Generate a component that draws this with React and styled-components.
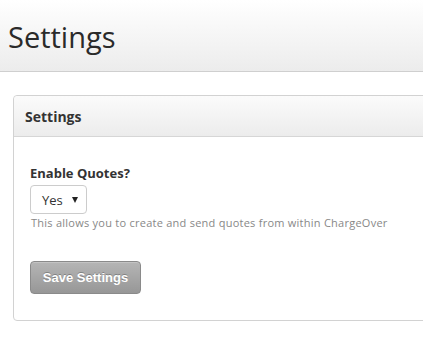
import React, { useState } from 'react';
import styled, { createGlobalStyle } from 'styled-components';

const GlobalStyle = createGlobalStyle`
	html, body {
		margin: 0;
		padding: 0;
		background: #fff;
		overflow: hidden;
	}
	body {
		font-family: "Open Sans", "Liberation Sans", sans-serif;
		color: #333;
	}
`;

const PageHeader = styled.header`
	height: 72px;
	box-sizing: border-box;
	padding: 20px 8px 0;
	background: linear-gradient(to bottom, #ffffff 0%, #ececec 100%);
	border-bottom: 1px solid #cfcfcf;
`;

const Title = styled.h1`
	margin: 0;
	font-size: 29px;
	line-height: 34px;
	font-weight: 400;
	color: #2a2a2a;
`;

const Panel = styled.section`
	margin: 23px -12px 0 13px;
	border: 1px solid #d2d2d2;
	border-radius: 4px;
	background: #fff;
	padding-bottom: 26px;
`;

const PanelHead = styled.div`
	height: 41px;
	box-sizing: border-box;
	padding: 1px 11px 0;
	display: flex;
	align-items: center;
	background: linear-gradient(to bottom, #fbfbfb 0%, #ececec 100%);
	border-bottom: 1px solid #d6d6d6;
	border-radius: 4px 4px 0 0;
	font-size: 14px;
	font-weight: 700;
	color: #333;
`;

const PanelBody = styled.div`
	padding: 27px 16px 0;
`;

const Label = styled.label`
	display: block;
	font-size: 13px;
	line-height: 18px;
	font-weight: 700;
	color: #333;
`;

const SelectBox = styled.div`
	position: relative;
	margin-top: 3px;
	width: 57px;
	height: 29px;
	box-sizing: border-box;
	border: 1px solid #cccccc;
	border-radius: 4px;
	background: #fff;
	display: flex;
	align-items: center;
	padding-left: 11px;
	font-size: 13px;
	color: #333;
	cursor: pointer;
`;

const Caret = styled.span`
	position: absolute;
	right: 8px;
	top: 11px;
	width: 0;
	height: 0;
	border-left: 3px solid transparent;
	border-right: 3px solid transparent;
	border-top: 6px solid #222;
`;

const Help = styled.p`
	margin: 1px 0 0 1px;
	font-size: 11px;
	line-height: 15px;
	letter-spacing: 0.25px;
	color: #888;
`;

const SaveButton = styled.button`
	margin-top: 31px;
	width: 111px;
	height: 33px;
	border: 1px solid #8a8a8a;
	border-radius: 4px;
	background: linear-gradient(to bottom, #b5b5b5 0%, #979797 100%);
	color: #fff;
	font-family: "Liberation Sans", Arial, sans-serif;
	font-size: 13px;
	font-weight: 700;
	text-shadow: 0 -1px 0 rgba(0, 0, 0, 0.25);
	box-shadow: inset 0 1px 0 rgba(255, 255, 255, 0.2);
	cursor: pointer;
`;

const App = () => {
	const [ quotes ] = useState('Yes');

	return (
		<>
			<GlobalStyle />
			<PageHeader>
				<Title>Settings</Title>
			</PageHeader>
			<Panel>
				<PanelHead>Settings</PanelHead>
				<PanelBody>
					<Label>Enable Quotes?</Label>
					<SelectBox>
						{quotes}
						<Caret />
					</SelectBox>
					<Help>This allows you to create and send quotes from within ChargeOver</Help>
					<SaveButton>Save Settings</SaveButton>
				</PanelBody>
			</Panel>
		</>
	);
};

export default App;
